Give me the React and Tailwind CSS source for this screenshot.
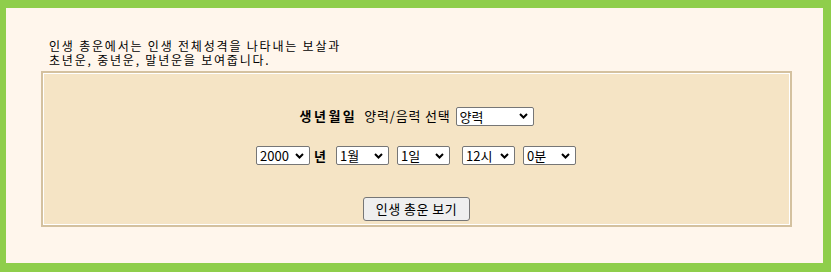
import React from "react";

const font = { fontFamily: '"Noto Sans CJK KR", "Noto Sans", sans-serif' };

function Chevron() {
  return (
    <svg width="9" height="6" viewBox="0 0 9 6" className="absolute right-[6px] top-1/2 -translate-y-1/2 pointer-events-none">
      <path d="M1 1 L4.5 4.5 L8 1" fill="none" stroke="#000" strokeWidth="2" />
    </svg>
  );
}

function Sel({ w, value, options }) {
  return (
    <span className="relative inline-block align-middle" style={{ width: w }}>
      <select
        defaultValue={value}
        className="appearance-none block w-full h-[19px] bg-white border border-[#767676] rounded-[2px] pl-[3px] pr-[14px] text-[13px] leading-[17px] text-black"
        style={font}
      >
        {options.map((o) => (
          <option key={o}>{o}</option>
        ))}
      </select>
      <Chevron />
    </span>
  );
}

export default function App() {
  return (
    <div className="w-[831px] h-[272px] bg-[#8fce4b] pt-[8px] pl-[6px] pr-[8px] pb-[9px]" style={font}>
      <div className="w-full h-full bg-[#fff6ec] pt-[31px] pl-[35px] pr-[31px]">
        <p className="text-[12px] leading-[14px] tracking-[1.8px] text-black pl-[8px]">
          인생 총운에서는 인생 전체성격을 나타내는 보살과
          <br />
          초년운, 중년운, 말년운을 보여줍니다.
        </p>
        <div className="mt-[4px] h-[156px] border-2 border-[#d4c19f]">
          <div className="h-full border border-white bg-[#f5e4c5] flex flex-col items-center">
            <div className="mt-[32px] h-[19px] flex items-center text-[13px] text-black">
              <span className="font-bold tracking-[2.5px]">생년월일</span>
              <span className="ml-[7px] tracking-[0.8px]">양력/음력 선택</span>
              <span className="ml-[5px]">
                <Sel w={78} value="양력" options={["양력", "음력"]} />
              </span>
            </div>
            <div className="mt-[21px] h-[19px] flex items-center text-[13px] text-black pr-[1px]">
              <Sel w={54} value="2000" options={["2000"]} />
              <span className="font-bold ml-[4px] mr-[10px]">년</span>
              <Sel w={53} value="1월" options={["1월"]} />
              <span className="w-[8px]" />
              <Sel w={53} value="1일" options={["1일"]} />
              <span className="w-[12px]" />
              <Sel w={53} value="12시" options={["12시"]} />
              <span className="w-[8px]" />
              <Sel w={53} value="0분" options={["0분"]} />
            </div>
            <button
              className="mt-[32px] w-[107px] h-[24px] bg-[#efefef] border border-[#767676] rounded-[3px] text-[13px] tracking-[0.5px] text-black"
              style={font}
            >
              인생 총운 보기
            </button>
          </div>
        </div>
      </div>
    </div>
  );
}
